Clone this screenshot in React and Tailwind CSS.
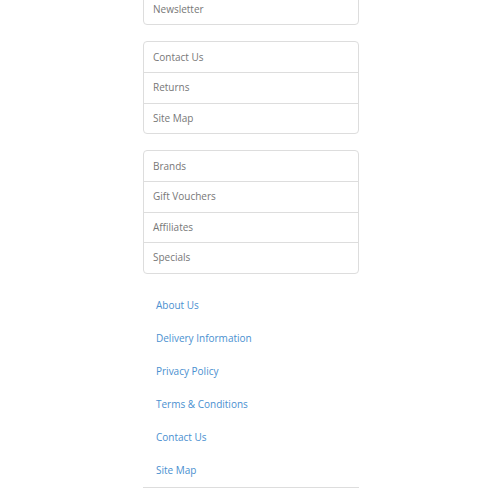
import React from "react";

const font = { fontFamily: '"Open Sans", "Noto Sans", sans-serif' };

function Box({ items, className = "" }) {
  return (
    <div className={"border border-[#dddddd] rounded-[4px] bg-white " + className}>
      {items.map((t, i) => (
        <div
          key={t}
          className={
            "flex items-center pl-[9px] text-[10px] text-[#777777] " +
            (i > 0 ? "h-[30.5px] border-t border-[#dddddd]" : "h-[30px]")
          }
        >
          {t}
        </div>
      ))}
    </div>
  );
}

export default function App() {
  const links = [
    "About Us",
    "Delivery Information",
    "Privacy Policy",
    "Terms & Conditions",
    "Contact Us",
    "Site Map",
  ];
  return (
    <div className="w-[500px] h-[500px] bg-white overflow-hidden" style={font}>
      <div className="ml-[143px] w-[216px] -mt-[7px]">
        <div className="border border-[#dddddd] rounded-[4px] bg-white">
          <div className="h-[30px] flex items-center pl-[9px] text-[10px] text-[#777777]">
            Newsletter
          </div>
        </div>
        <Box className="mt-[16px]" items={["Contact Us", "Returns", "Site Map"]} />
        <Box className="mt-[16px]" items={["Brands", "Gift Vouchers", "Affiliates", "Specials"]} />
        <div className="mt-[15px] flex flex-col">
          {links.map((t) => (
            <div key={t} className="h-[33px] flex items-center pl-[13px] text-[10px] text-[#4a90d0]">
              {t}
            </div>
          ))}
        </div>
        <div className="border-t border-[#dddddd]"></div>
      </div>
    </div>
  );
}
